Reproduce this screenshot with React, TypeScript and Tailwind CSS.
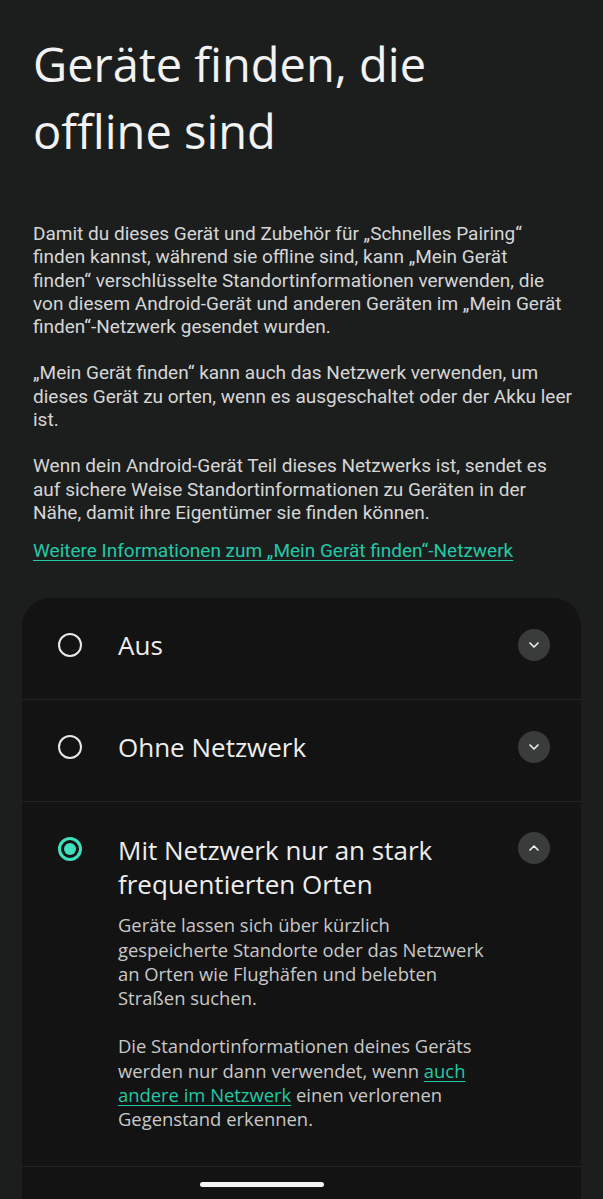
import { ChevronDown, ChevronUp } from "lucide-react";

const body = { fontFamily: "Roboto, 'Liberation Sans', sans-serif" };
const gsans = { fontFamily: "'Open Sans', 'Liberation Sans', sans-serif" };

function Radio({ on }: { on?: boolean }) {
  return on ? (
    <div className="w-[24px] h-[24px] rounded-full border-[3px] border-[#3fe0bd] flex items-center justify-center shrink-0">
      <div className="w-[12px] h-[12px] rounded-full bg-[#3fe0bd]" />
    </div>
  ) : (
    <div className="w-[24px] h-[24px] rounded-full border-[2.5px] border-[#e8e8e8] shrink-0" />
  );
}

function Toggle({ open }: { open?: boolean }) {
  const Icon = open ? ChevronUp : ChevronDown;
  return (
    <div className="w-[32px] h-[32px] rounded-full bg-[#3a3b3b] flex items-center justify-center shrink-0">
      <Icon className="w-[16px] h-[16px] text-[#ededed]" strokeWidth={2.5} />
    </div>
  );
}

function SimpleRow({ label }: { label: string }) {
  return (
    <div className="h-[102px] flex items-center pb-[7px] pl-[36px] pr-[31px] border-b border-[#242525]">
      <Radio />
      <span className="ml-[36px] flex-1 text-[26px] text-[#eeeeee]" style={gsans}>
        {label}
      </span>
      <Toggle />
    </div>
  );
}

export default function App() {
  return (
    <div className="relative w-[603px] h-[1199px] overflow-hidden bg-[#1c1e1e]">
      <div className="pl-[33px] pr-[6px] pt-[31px]">
        <h1 className="text-[47px] leading-[67px] text-[#f2f2f2]" style={gsans}>
          Geräte finden, die
          <br />
          offline sind
        </h1>
        <div className="mt-[57px] text-[19px] leading-[23.3px] text-[#d6d6d6] space-y-[23px] whitespace-nowrap" style={body}>
          <p>
            Damit du dieses Gerät und Zubehör für „Schnelles Pairing“
            <br />
            finden kannst, während sie offline sind, kann „Mein Gerät
            <br />
            finden“ verschlüsselte Standortinformationen verwenden, die
            <br />
            von diesem Android-Gerät und anderen Geräten im „Mein Gerät
            <br />
            finden“-Netzwerk gesendet wurden.
          </p>
          <p>
            „Mein Gerät finden“ kann auch das Netzwerk verwenden, um
            <br />
            dieses Gerät zu orten, wenn es ausgeschaltet oder der Akku leer
            <br />
            ist.
          </p>
          <p>
            Wenn dein Android-Gerät Teil dieses Netzwerks ist, sendet es
            <br />
            auf sichere Weise Standortinformationen zu Geräten in der
            <br />
            Nähe, damit ihre Eigentümer sie finden können.
          </p>
        </div>
        <a className="block mt-[15px] text-[19px] leading-[23px] text-[#22c9a6] underline underline-offset-[3px]" style={body}>
          Weitere Informationen zum „Mein Gerät finden“-Netzwerk
        </a>
      </div>

      <div className="mt-[36px] mx-[22px] rounded-t-[28px] bg-[#131313]">
        <SimpleRow label="Aus" />
        <SimpleRow label="Ohne Netzwerk" />
        <div className="flex items-start pt-[35px] pb-[34px] pl-[36px] pr-[31px] border-b border-[#242525]">
          <Radio on />
          <div className="ml-[36px] flex-1" style={gsans}>
            <div className="text-[26px] leading-[34px] text-[#eeeeee] -mt-[4px] -mr-[40px]">
              Mit Netzwerk nur an stark frequentierten Orten
            </div>
            <div className="mt-[12px] text-[18.4px] leading-[24.3px] text-[#c9c9c9] space-y-[24px] whitespace-nowrap -mr-[40px]">
              <p>
                Geräte lassen sich über kürzlich
                <br />
                gespeicherte Standorte oder das Netzwerk
                <br />
                an Orten wie Flughäfen und belebten
                <br />
                Straßen suchen.
              </p>
              <p>
                Die Standortinformationen deines Geräts
                <br />
                werden nur dann verwendet, wenn{" "}
                <span className="text-[#22c9a6] underline underline-offset-[3px]">auch</span>
                <br />
                <span className="text-[#22c9a6] underline underline-offset-[3px]">andere im Netzwerk</span> einen verlorenen
                <br />
                Gegenstand erkennen.
              </p>
            </div>
          </div>
          <div className="-mt-[5px]">
            <Toggle open />
          </div>
        </div>
        <div className="h-[60px]" />
      </div>

      <div className="absolute left-[200px] bottom-[12px] w-[124px] h-[5px] rounded-full bg-[#f4f4f4]" />
    </div>
  );
}
